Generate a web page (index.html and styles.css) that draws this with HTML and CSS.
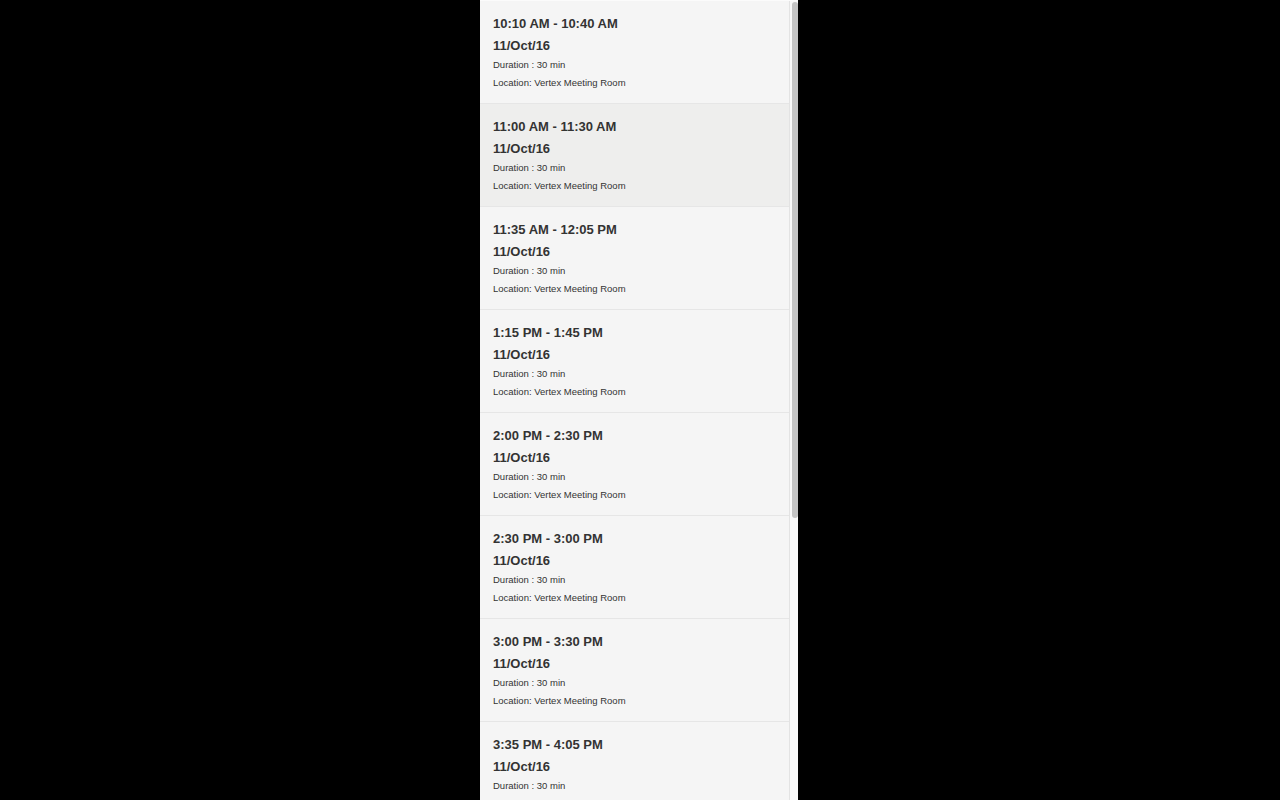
FILE: index.html
```html
<!DOCTYPE html>
<html>
<head>
<meta charset="utf-8">
<link rel="stylesheet" href="styles.css">
</head>
<body>
<div class="panel">
  <ul class="slots">
    <li class="slot"><div class="time">10:10 AM - 10:40 AM</div><div class="date">11/Oct/16</div><div class="meta">Duration : 30 min</div><div class="meta">Location: Vertex Meeting Room</div></li>
    <li class="slot active"><div class="time">11:00 AM - 11:30 AM</div><div class="date">11/Oct/16</div><div class="meta">Duration : 30 min</div><div class="meta">Location: Vertex Meeting Room</div></li>
    <li class="slot"><div class="time">11:35 AM - 12:05 PM</div><div class="date">11/Oct/16</div><div class="meta">Duration : 30 min</div><div class="meta">Location: Vertex Meeting Room</div></li>
    <li class="slot"><div class="time">1:15 PM - 1:45 PM</div><div class="date">11/Oct/16</div><div class="meta">Duration : 30 min</div><div class="meta">Location: Vertex Meeting Room</div></li>
    <li class="slot"><div class="time">2:00 PM - 2:30 PM</div><div class="date">11/Oct/16</div><div class="meta">Duration : 30 min</div><div class="meta">Location: Vertex Meeting Room</div></li>
    <li class="slot"><div class="time">2:30 PM - 3:00 PM</div><div class="date">11/Oct/16</div><div class="meta">Duration : 30 min</div><div class="meta">Location: Vertex Meeting Room</div></li>
    <li class="slot"><div class="time">3:00 PM - 3:30 PM</div><div class="date">11/Oct/16</div><div class="meta">Duration : 30 min</div><div class="meta">Location: Vertex Meeting Room</div></li>
    <li class="slot"><div class="time">3:35 PM - 4:05 PM</div><div class="date">11/Oct/16</div><div class="meta">Duration : 30 min</div><div class="meta">Location: Vertex Meeting Room</div></li>
  </ul>
  <div class="scrollbar"><div class="thumb"></div></div>
</div>
</body>
</html>
```
FILE: styles.css
```css
html, body {
  margin: 0;
  padding: 0;
  height: 100%;
  background: #000;
}
body {
  font-family: "Liberation Sans", Arial, sans-serif;
  color: #333;
  overflow: hidden;
}
.panel {
  display: flex;
  width: 318px;
  height: 800px;
  margin: 0 0 0 480px;
  background: #f5f5f5;
  overflow: hidden;
  box-sizing: border-box;
  border-top: 1px solid #fbfbfb;
}
.slots {
  flex: 1;
  min-width: 0;
  list-style: none;
  margin: 0;
  padding: 0;
}
.slot {
  padding: 13px 13px 11px;
  border-bottom: 1px solid #e6e6e6;
  background: #f5f5f5;
}
.slot.active {
  background: #eeeeed;
}
.time {
  font-size: 13px;
  font-weight: bold;
  line-height: 20px;
  margin-bottom: 2px;
  white-space: nowrap;
}
.date {
  font-size: 13px;
  font-weight: bold;
  line-height: 20px;
}
.meta {
  font-size: 9.5px;
  line-height: 18px;
  white-space: nowrap;
}
.scrollbar {
  width: 6px;
  flex: none;
  background: #f8f8f8;
  border-left: 1px solid #e3e3e3;
  padding: 1px 0 0 2px;
}
.thumb {
  height: 516px;
  background: #c3c3c3;
  border-radius: 3px;
}
```
